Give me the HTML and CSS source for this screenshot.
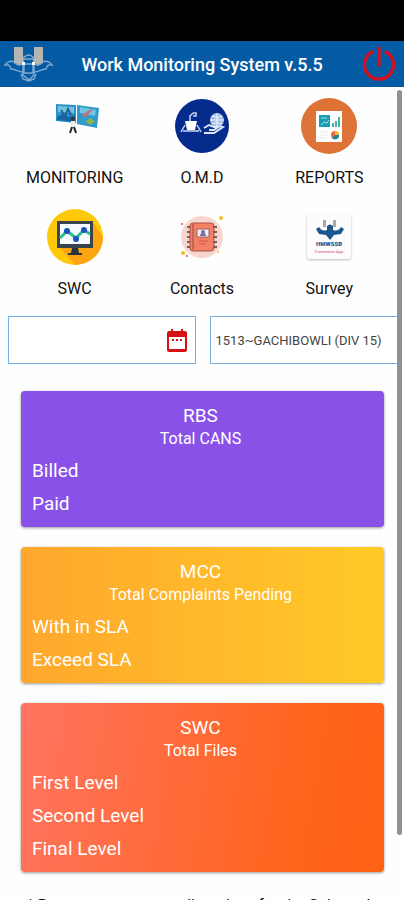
FILE: index.html
```html
<!DOCTYPE html>
<html lang="en">
<head>
  <meta charset="UTF-8">
  <meta name="viewport" content="width=device-width, initial-scale=1.0">
  <title>Work Monitoring System</title>
  <link rel="stylesheet" href="styles.css">
</head>
<body>
  <div class="status-bar"></div>

  <header>
    <svg class="logo" viewBox="0 0 50 36">
      <path d="M10 1h9v15l-4 4-5-3zM30 1h9v16l-5 3-4-4z" fill="#b5b5b2"/>
      <g fill="none" stroke="#7eabd6" stroke-width="1.400">
        <path d="M20 17c-5 4-8 1-10-1-3-2-7 0-9 3 4-1 5 1 6 4 4 0 7 3 12 3M29 17c5 4 8 1 10-1 3-2 7 0 9 3-4-1-5 1-6 4-4 0-7 3-12 3"/>
        <path d="M19 17l1-6q5-4 9 0l1 6v12l-5 5-6-5zM19 13h11M20 18h9v9h-9zM17 28l2 5 6 2 5-2 2-5"/>
      </g>
      <path d="M18 16h3v3h-3zM28 16h3v3h-3z" fill="#fff"/>
    </svg>
    <h1>Work Monitoring System v.5.5</h1>
    <button class="power" aria-label="Logout">
      <svg viewBox="0 0 34 36" fill="none" stroke="#cf1220" stroke-width="3.400" stroke-linecap="round">
        <path d="M10 6a14.500 14.500 0 1 0 14 0M17 2v17"/>
      </svg>
    </button>
  </header>

  <main>
    <nav class="menu">
      <a href="#monitoring">
        <svg viewBox="0 0 56 56">
          <path d="M9 6l20 1v18L9 23z" fill="#2b91c8"/>
          <path d="M30 7l22 3-2 20-20-4z" fill="#2d9bcb"/>
          <path d="M11 8l16 1v6l-16-1zM33 9l16 3-1 6-15-3z" fill="#71c3df"/>
          <path d="M10 19l6-3 5 3 7-2v7l-18-2z" fill="#1765a2"/>
          <path d="M14 12l4 6 3-7 3 6" stroke="#245e97" stroke-width="2" fill="none"/>
          <path d="M34 18l8-6 4-1-7 8z" fill="#c1717c"/>
          <path d="M38 23l6-3 4 4-5 3z" fill="#8bb451"/>
          <circle cx="26" cy="21" r="2" fill="#334"/>
          <path d="M24 23h4l1 7-3 1-2-1z" fill="#eceff2"/>
          <path d="M25 29l-2 6M27 29l2 6" stroke="#222" stroke-width="2"/>
        </svg>
        MONITORING
      </a>
      <a href="#omd">
        <svg viewBox="0 0 56 56">
          <circle cx="28" cy="28" r="27" fill="#052b8c"/>
          <path d="M11 23h12l-2 9h-8z" fill="#fff"/>
          <path d="M16 23v-5l3-3M19 15h3v3h-3M11 27l-4 7M23 27l4 7M9 33h16" stroke="#cbd8f1" stroke-width="1.500" fill="none"/>
          <circle cx="43" cy="22" r="7" fill="#a9c0e6"/>
          <path d="M36 22h14M43 15v14M38 18q5 3 10 0M38 26q5-3 10 0" stroke="#f0f5ff" fill="none"/>
          <path d="M30 30l5-3 5 2 4-1M30 35h10l9-6-3-1-6 4h-5" stroke="#dce6f7" stroke-width="2" fill="none"/>
        </svg>
        O.M.D
      </a>
      <a href="#reports">
        <svg viewBox="0 0 56 56">
          <circle cx="28" cy="28" r="28" fill="#dd7336"/>
          <path d="M15 13h26v31H15z" fill="#fff"/>
          <path d="M18 17h11v12H18z" fill="#189db1"/>
          <path d="M20 20h6M20 27l3-3 3 1 2-3" stroke="#a4dde3" fill="none"/>
          <path d="M32 29v-4M35 29v-6M38 29V19" stroke="#43b5a5" stroke-width="2"/>
          <path d="M19 34h8M19 37h8M19 40h6" stroke="#e9e9e9"/>
          <circle cx="34" cy="37" r="4" fill="#ef6940"/>
          <path d="M34 37v-4a4 4 0 0 1 4 4z" fill="#f4bd35"/>
          <path d="M34 37h4a4 4 0 0 1-7 3z" fill="#17899f"/>
        </svg>
        REPORTS
      </a>
      <a href="#swc">
        <svg viewBox="0 0 56 56">
          <circle cx="28" cy="28" r="28" fill="#ffc909"/>
          <path d="M46 14l10 14a28 28 0 0 1-28 28L12 38z" fill="#fca510"/>
          <path d="M10 12h36v27H10z" fill="#37434d"/>
          <path d="M13 15h30v20H13z" fill="#f7fbff"/>
          <path d="M25 39h6l1 5h3v2H21v-2h3z" fill="#26323d"/>
          <path d="M13 29l7-7 9 7 8-8 6 4" stroke="#2dbb92" stroke-width="3" fill="none"/>
          <g fill="#1854bd"><circle cx="20" cy="22" r="3"/><circle cx="29" cy="30" r="3"/><circle cx="37" cy="21" r="3"/></g>
        </svg>
        SWC
      </a>
      <a href="#contacts">
        <svg viewBox="0 0 56 56">
          <circle cx="28" cy="28" r="21" fill="#f8d6d0"/>
          <rect x="16" y="14" width="24" height="28" rx="3" fill="#f47f62" stroke="#a75044"/>
          <path d="M19 15v26" stroke="#8f5149"/>
          <path d="M16 18h-3M16 23h-3M16 28h-3M16 33h-3M16 38h-3M39 18h4M39 23h4M39 28h4M39 33h4M39 38h4" stroke="#785d64" stroke-width="2"/>
          <path d="M23 20h12v8H23z" fill="#f3eef4" stroke="#9d6262"/>
          <path d="M26 27q0-3 3-3t3 3" fill="#786da2"/>
          <circle cx="29" cy="23" r="2" fill="#786da2"/>
          <path d="M25 32h9M25 35h7" stroke="#c6604e"/>
          <g fill="#f4bf26"><circle cx="9" cy="44" r="2"/><circle cx="47" cy="9" r="2"/><circle cx="44" cy="43" r="1"/></g>
          <g fill="#df4361"><circle cx="8" cy="15" r="1"/><circle cx="13" cy="47" r="1"/></g>
        </svg>
        Contacts
      </a>
      <a href="#survey">
        <svg class="survey-icon" viewBox="0 0 56 56">
          <rect class="tile" x="6" y="5" width="44" height="45" rx="3"/>
          <path d="M22 11h3v7h-3zM32 11h3v7h-3z" fill="#aaa"/>
          <path d="M26 17q3-3 6 0v4q5 2 8-3l3 2-3 5-7 1-4 5-4-5-7-1-3-5 3-2q3 5 8 3z" fill="#1d5792"/>
          <text class="survey-name" x="28" y="37">HMWSSB</text>
          <text class="survey-sub" x="28" y="44">Connection App</text>
        </svg>
        Survey
      </a>
    </nav>

    <div class="filters">
      <div class="date-box">
        <input type="text" aria-label="Date">
        <button aria-label="Choose date">
          <svg viewBox="0 0 20 23">
            <path d="M2 2h2V0h2v2h8V0h2v2h2q2 0 2 2v17q0 2-2 2H2q-2 0-2-2V4q0-2 2-2z" fill="#d51017"/>
            <path d="M2 8h16v12H2z" fill="#fff"/>
            <path d="M5 11h2M9 11h2M13 11h2" stroke="#d51017" stroke-width="2"/>
          </svg>
        </button>
      </div>
      <select aria-label="Division">
        <option>1513~GACHIBOWLI (DIV 15)</option>
      </select>
    </div>

    <div class="cards">
      <section class="card rbs">
        <h2>RBS</h2>
        <h3>Total CANS</h3>
        <ul>
          <li>Billed</li>
          <li>Paid</li>
        </ul>
      </section>
      <section class="card mcc">
        <h2>MCC</h2>
        <h3>Total Complaints Pending</h3>
        <ul>
          <li>With in SLA</li>
          <li>Exceed SLA</li>
        </ul>
      </section>
      <section class="card swc">
        <h2>SWC</h2>
        <h3>Total Files</h3>
        <ul>
          <li>First Level</li>
          <li>Second Level</li>
          <li>Final Level</li>
        </ul>
      </section>
    </div>

    <p class="note">* Rows are summary all on days for the Selected</p>
    <div class="scrollbar"></div>
  </main>
</body>
</html>
```
FILE: styles.css
```css
* {
  box-sizing: border-box;
}
body {
  font-family: Roboto, sans-serif;
  background-color: #fefefe;
  color: #111;
  margin: 0;
  height: 100vh;
  display: flex;
  flex-direction: column;
  overflow: hidden;
}
h1, h2, h3, ul, p {
  margin: 0;
  padding: 0;
}
button {
  background: none;
  border: none;
  padding: 0;
  cursor: pointer;
}
svg {
  display: block;
}
.status-bar {
  background-color: #000;
  height: 41px;
  flex-shrink: 0;
}
header {
  background-color: #045ba4;
  color: #fff;
  height: 46px;
  flex-shrink: 0;
  display: grid;
  grid-template-columns: 1fr auto 1fr;
  align-items: center;
  padding: 0 4px;
}
h1 {
  font-size: 18px;
  font-weight: 500;
}
.logo {
  width: 50px;
  height: 36px;
}
.power {
  justify-self: end;
  margin-right: 4px;
}
.power svg {
  width: 34px;
  height: 36px;
}
main {
  position: relative;
  flex: 1;
  min-height: 0;
  overflow: hidden;
}

/* menu */
.menu {
  display: grid;
  grid-template-columns: repeat(3, 1fr);
  row-gap: 20px;
  padding: 11px 11px 0;
}
.menu a {
  display: flex;
  flex-direction: column;
  align-items: center;
  gap: 12px;
  color: #111;
  font-size: 16px;
  line-height: 23px;
  text-decoration: none;
}
.menu svg {
  width: 56px;
  height: 56px;
}
.tile {
  fill: #fcfcfc;
  filter: drop-shadow(0 1px 1px #bbb);
}
.survey-icon text {
  text-anchor: middle;
}
.survey-name {
  font-size: 6px;
  font-weight: 900;
  fill: #1d5792;
}
.survey-sub {
  font-size: 4px;
  fill: #d4445e;
}

/* filters */
.filters {
  display: grid;
  grid-template-columns: minmax(0, 1fr) minmax(0, 1fr);
  gap: 14px;
  padding: 16px 7px 0 8px;
}
.date-box, select {
  height: 48px;
  border: 1px solid #79b0e0;
  background-color: #fff;
}
.date-box {
  display: flex;
  align-items: center;
  padding-right: 8px;
}
.date-box input {
  flex: 1;
  min-width: 0;
  height: 100%;
  border: none;
  background: none;
}
.date-box svg {
  width: 20px;
  height: 23px;
}
select {
  width: 100%;
  appearance: none;
  border-right: none;
  border-radius: 0;
  padding: 0 5px;
  color: #444;
  font-family: inherit;
  font-size: 13px;
}

/* cards */
.cards {
  display: flex;
  flex-direction: column;
  gap: 20px;
  padding: 27px 20px 0 21px;
}
.card {
  border-radius: 4px;
  padding: 12px 15px 7px 11px;
  color: #fff;
  box-shadow: 0 1px 3px rgba(0, 0, 0, 0.4);
}
.rbs {
  background-color: #8951e8;
}
.mcc {
  background: linear-gradient(to right, #ffa72d, #ffca28);
}
.swc {
  background: linear-gradient(100deg, #ff7461, #ff641c 75%, #ff6114);
}
.card h2 {
  font-size: 19px;
  font-weight: 400;
  line-height: 25px;
  text-align: center;
}
.card h3 {
  font-size: 16px;
  font-weight: 400;
  line-height: 21px;
  text-align: center;
}
.card ul {
  list-style: none;
  padding-top: 5px;
}
.card li {
  font-size: 19px;
  line-height: 33px;
}
.note {
  padding: 22px 20px 0 27px;
  font-size: 16px;
  line-height: 24px;
  white-space: nowrap;
}
.scrollbar {
  position: absolute;
  top: 3px;
  right: 2px;
  bottom: 65px;
  width: 5px;
  border-radius: 3px;
  background-color: #919191;
}
```
